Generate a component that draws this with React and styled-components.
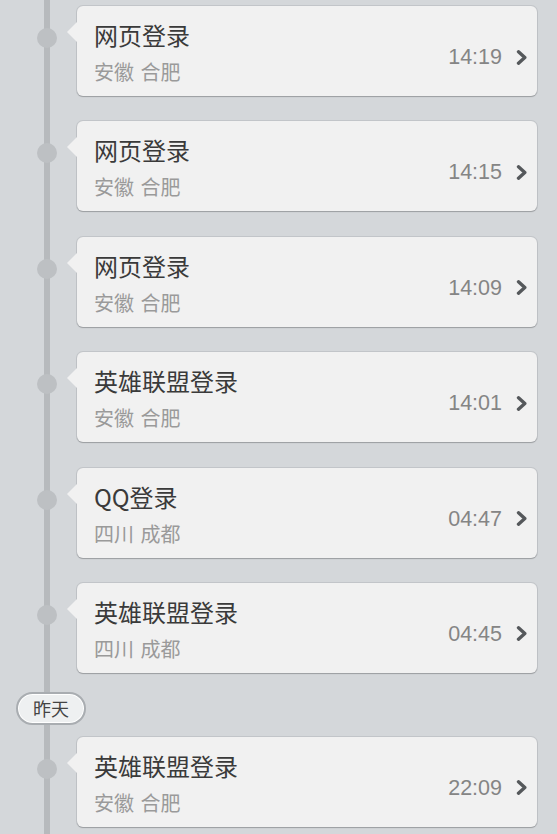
import React from 'react';
import styled, { createGlobalStyle } from 'styled-components';

const GlobalStyle = createGlobalStyle`
  html, body {
    margin: 0;
    padding: 0;
    background: #d4d7da;
  }
  body {
    font-family: "Noto Sans CJK SC", "Noto Sans", sans-serif;
  }
`

const Timeline = styled.div`
  width: 557px;
  height: 834px;
  overflow: hidden;
  box-sizing: border-box;
  padding-top: 6px;
  background: linear-gradient(to right, transparent 44px, #b7babd 44px, #b7babd 50px, transparent 50px);
`

const Row = styled.div`
  display: grid;
  grid-template-columns: 77px 460px;
  margin-bottom: ${p => p.$gap}px;
`

const Dot = styled.div`
  width: 20px;
  height: 20px;
  border-radius: 50%;
  background: #bdc0c3;
  margin: 22px 0 0 37px;
`

const Card = styled.div`
  position: relative;
  height: 90px;
  box-sizing: border-box;
  background: #f1f1f1;
  border-radius: 6px;
  box-shadow: 0 0 0 1px rgba(160, 164, 168, 0.35), 0 1px 1px rgba(0, 0, 0, 0.28);
  display: flex;
  align-items: flex-start;
  padding: 15px 9px 0 17px;

  &::before {
    content: '';
    position: absolute;
    left: -10px;
    top: 16px;
    border-top: 10px solid transparent;
    border-bottom: 10px solid transparent;
    border-right: 10px solid #f1f1f1;
  }
`

const Info = styled.div`
  flex: 1;
  display: flex;
  flex-direction: column;
  gap: 11px;
`

const Title = styled.div`
  font-size: 24px;
  line-height: 28px;
  color: #3a3a3a;
`

const Place = styled.div`
  font-size: 20px;
  line-height: 24px;
  color: #9a9a9a;
  word-spacing: 2px;
`

const Meta = styled.div`
  display: flex;
  align-items: center;
  gap: 14px;
  margin-top: 24px;
`

const Time = styled.span`
  font-family: "Liberation Sans", Arial, sans-serif;
  font-size: 21.5px;
  line-height: 24px;
  color: #858585;
`

const Chevron = () => (
  <svg width="12" height="15" viewBox="0 0 12 15">
    <path d="M2.5 1.8 L8.8 7.5 L2.5 13.2" fill="none" stroke="#55585b" strokeWidth="3.4" strokeLinecap="round" strokeLinejoin="round" />
  </svg>
)

const DayPill = styled.div`
  width: 70px;
  height: 33px;
  box-sizing: border-box;
  margin: 0 0 12px 16px;
  border: 2px solid #a9adb1;
  border-radius: 17px;
  background: #eef0f1;
  box-shadow: inset 0 0 0 1px #ffffff;
  display: flex;
  align-items: center;
  justify-content: center;
  font-size: 18px;
  color: #444;
`

const today = [
  { title: '网页登录', place: '安徽 合肥', time: '14:19' },
  { title: '网页登录', place: '安徽 合肥', time: '14:15' },
  { title: '网页登录', place: '安徽 合肥', time: '14:09' },
  { title: '英雄联盟登录', place: '安徽 合肥', time: '14:01' },
  { title: 'QQ登录', place: '四川 成都', time: '04:47' },
  { title: '英雄联盟登录', place: '四川 成都', time: '04:45' },
]

const yesterday = [
  { title: '英雄联盟登录', place: '安徽 合肥', time: '22:09' },
]

const Entry = ({ item, gap }) => (
  <Row $gap={gap}>
    <Dot />
    <Card>
      <Info>
        <Title>{item.title}</Title>
        <Place>{item.place}</Place>
      </Info>
      <Meta>
        <Time>{item.time}</Time>
        <Chevron />
      </Meta>
    </Card>
  </Row>
)

export default function App() {
  return (
    <>
      <GlobalStyle />
      <Timeline>
        {today.map((item, i) => (
          <Entry key={i} item={item} gap={i === today.length - 1 ? 19 : 25.4} />
        ))}
        <DayPill>昨天</DayPill>
        {yesterday.map((item, i) => (
          <Entry key={i} item={item} gap={25} />
        ))}
      </Timeline>
    </>
  )
}
